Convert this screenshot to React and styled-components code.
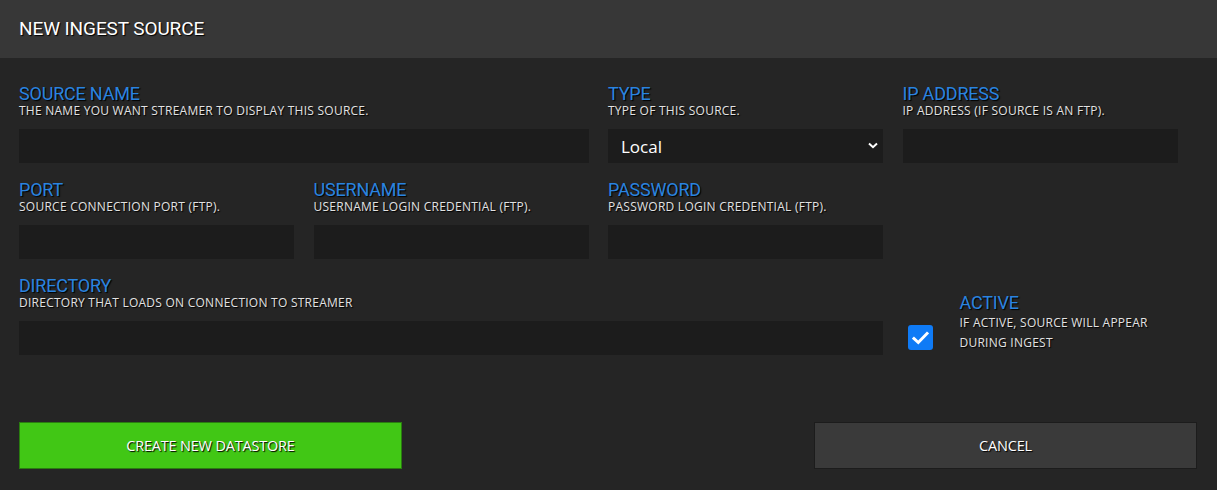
import React from "react";
import styled, { createGlobalStyle } from "styled-components";

const Global = createGlobalStyle`
  html, body { margin: 0; padding: 0; background: #252525; }
  body { font-family: Roboto, "Noto Sans", "DejaVu Sans", sans-serif; }
  * { box-sizing: border-box; }
`;

const Page = styled.div`
  width: 1217px;
  height: 490px;
  background: #252525;
  display: flex;
  flex-direction: column;
  overflow: hidden;
`;

const Header = styled.header`
  height: 58px;
  background: #373737;
  display: flex;
  align-items: center;
  padding: 0 19px 2px;
`;

const Title = styled.h1`
  margin: 0;
  font-size: 19px;
  font-weight: 400;
  color: #ffffff;
  text-shadow: 1px 1px 1px #000;
  letter-spacing: -0.1px;
`;

const Form = styled.form`
  padding: 26px 20px 21px 19px;
  display: flex;
  flex-direction: column;
  flex: 1;
`;

const Grid = styled.div`
  display: grid;
  grid-template-columns: repeat(4, 275px);
  column-gap: 19.5px;
  row-gap: 17px;
`;

const Field = styled.div`
  grid-column: span ${(p) => p.$span || 1};
  display: flex;
  flex-direction: column;
`;

const Label = styled.label`
  font-size: 18px;
  line-height: 20px;
  color: #2a84e0;
  text-shadow: 1px 1px 1px #000;
  letter-spacing: -0.2px;
`;

const Desc = styled.div`
  font-family: "Open Sans", Roboto, sans-serif;
  font-size: 12px;
  letter-spacing: 0.25px;
  line-height: ${(p) => p.$lh || 14}px;
  color: #e2e2e2;
  text-shadow: 1px 1px 1px #000;
  margin-bottom: ${(p) => (p.$lh ? 0 : 11)}px;
`;

const Input = styled.input`
  height: 34px;
  width: 100%;
  background: #1c1c1c;
  border: none;
  outline: none;
  color: #fff;
  font-size: 15px;
  padding: 0 14px;
  font-family: inherit;
`;

const SelectWrap = styled.div`
  position: relative;
  height: 34px;
`;

const Select = styled.select`
  appearance: none;
  -webkit-appearance: none;
  height: 34px;
  width: 100%;
  background: #1c1c1c;
  border: none;
  outline: none;
  color: #ffffff;
  font-family: "Open Sans", Roboto, sans-serif;
  font-size: 17px;
  padding: 0 13px;
`;

const Chevron = styled.svg`
  position: absolute;
  right: 5px;
  top: 13px;
  pointer-events: none;
`;

const ActiveCell = styled.div`
  display: flex;
  align-items: flex-end;
  padding-left: 5px;
  padding-bottom: 2px;
`;

const Check = styled.span`
  width: 25px;
  height: 25px;
  border-radius: 3px;
  background: #0f7bf6;
  display: flex;
  align-items: center;
  justify-content: center;
  flex: none;
  margin-right: 27px;
  margin-bottom: 3px;
`;

const ActiveText = styled.div`
  display: flex;
  flex-direction: column;
`;

const Actions = styled.div`
  margin-top: 67px;
  display: flex;
  justify-content: space-between;
`;

const Button = styled.button`
  width: 383px;
  height: 47px;
  border: 1px solid ${(p) => (p.$primary ? "#2a7d10" : "#1c1c1c")};
  background: ${(p) => (p.$primary ? "#41c715" : "#3a3a3a")};
  color: #ffffff;
  font-family: "Open Sans", Roboto, sans-serif;
  font-size: 14.5px;
  text-shadow: 1px 1px 1px #000;
  letter-spacing: -0.2px;
  cursor: pointer;
  padding: 0;
`;

function TextField({ label, desc, span }) {
  return (
    <Field $span={span}>
      <Label>{label}</Label>
      <Desc>{desc}</Desc>
      <Input type="text" />
    </Field>
  );
}

export default function App() {
  return (
    <Page>
      <Global />
      <Header>
        <Title>NEW INGEST SOURCE</Title>
      </Header>
      <Form onSubmit={(e) => e.preventDefault()}>
        <Grid>
          <TextField label="SOURCE NAME" desc="THE NAME YOU WANT STREAMER TO DISPLAY THIS SOURCE." span={2} />
          <Field>
            <Label>TYPE</Label>
            <Desc>TYPE OF THIS SOURCE.</Desc>
            <SelectWrap>
              <Select defaultValue="Local">
                <option>Local</option>
                <option>FTP</option>
              </Select>
              <Chevron width="10" height="7" viewBox="0 0 10 7">
                <path d="M1 1.5 L5 5.2 L9 1.5" fill="none" stroke="#fff" strokeWidth="2" />
              </Chevron>
            </SelectWrap>
          </Field>
          <TextField label="IP ADDRESS" desc="IP ADDRESS (IF SOURCE IS AN FTP)." />
          <TextField label="PORT" desc="SOURCE CONNECTION PORT (FTP)." />
          <TextField label="USERNAME" desc="USERNAME LOGIN CREDENTIAL (FTP)." />
          <TextField label="PASSWORD" desc="PASSWORD LOGIN CREDENTIAL (FTP)." />
          <div />
          <TextField label="DIRECTORY" desc="DIRECTORY THAT LOADS ON CONNECTION TO STREAMER" span={3} />
          <ActiveCell>
            <Check>
              <svg width="17" height="14" viewBox="0 0 17 14">
                <path d="M2 7.5 L6.3 11.5 L15 2.5" fill="none" stroke="#fff" strokeWidth="3" strokeLinecap="square" />
              </svg>
            </Check>
            <ActiveText>
              <Label>ACTIVE</Label>
              <Desc $lh={20}>
                IF ACTIVE, SOURCE WILL APPEAR
                <br />
                DURING INGEST
              </Desc>
            </ActiveText>
          </ActiveCell>
        </Grid>
        <Actions>
          <Button $primary type="submit">CREATE NEW DATASTORE</Button>
          <Button type="button">CANCEL</Button>
        </Actions>
      </Form>
    </Page>
  );
}
